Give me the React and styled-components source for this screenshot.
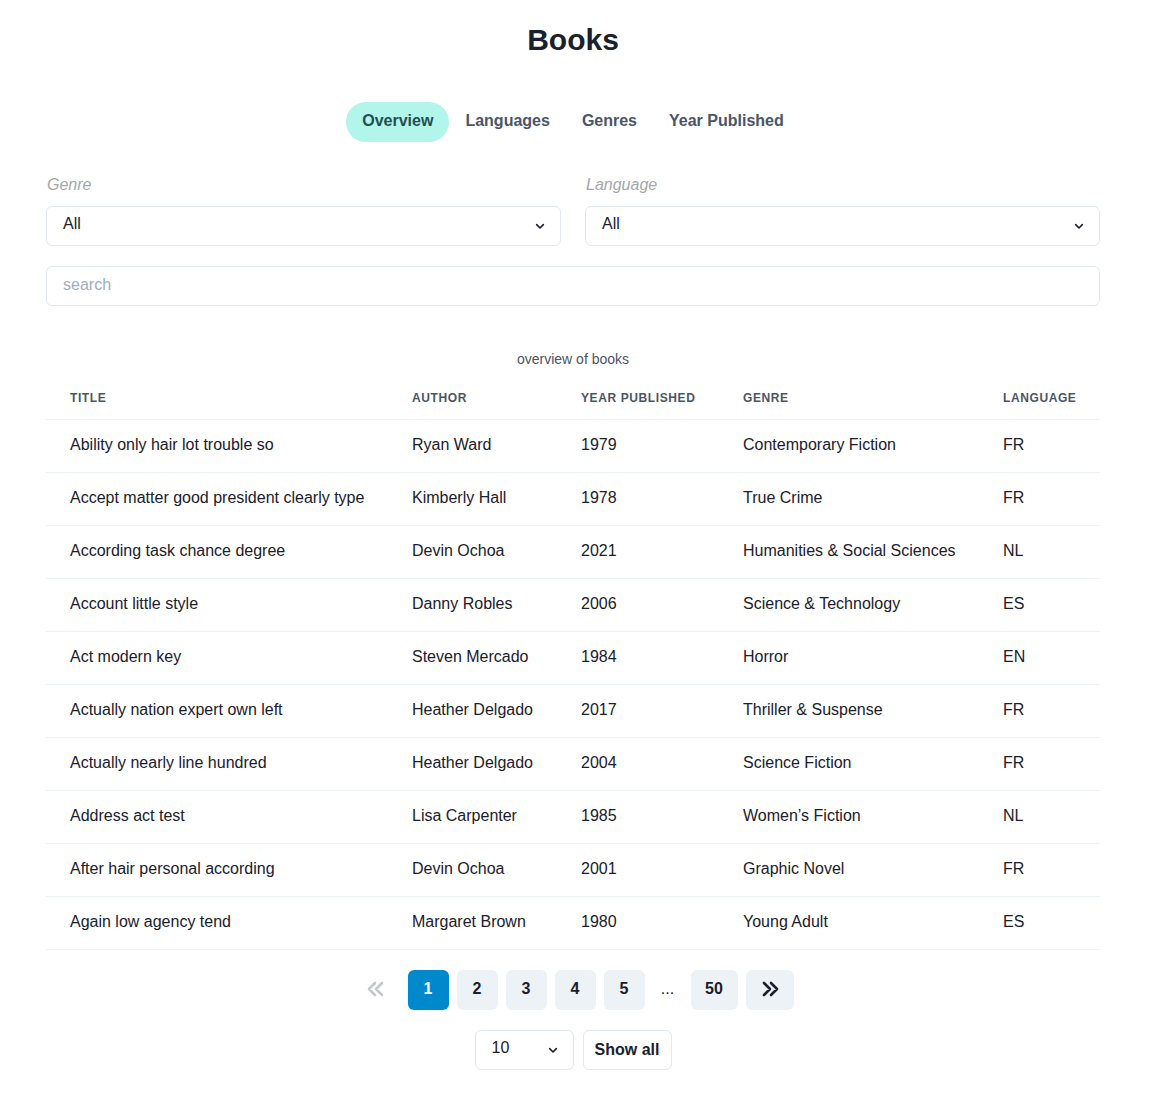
import React from 'react';
import styled, { createGlobalStyle } from 'styled-components';

const books = [
  ['Ability only hair lot trouble so', 'Ryan Ward', '1979', 'Contemporary Fiction', 'FR'],
  ['Accept matter good president clearly type', 'Kimberly Hall', '1978', 'True Crime', 'FR'],
  ['According task chance degree', 'Devin Ochoa', '2021', 'Humanities & Social Sciences', 'NL'],
  ['Account little style', 'Danny Robles', '2006', 'Science & Technology', 'ES'],
  ['Act modern key', 'Steven Mercado', '1984', 'Horror', 'EN'],
  ['Actually nation expert own left', 'Heather Delgado', '2017', 'Thriller & Suspense', 'FR'],
  ['Actually nearly line hundred', 'Heather Delgado', '2004', 'Science Fiction', 'FR'],
  ['Address act test', 'Lisa Carpenter', '1985', 'Women’s Fiction', 'NL'],
  ['After hair personal according', 'Devin Ochoa', '2001', 'Graphic Novel', 'FR'],
  ['Again low agency tend', 'Margaret Brown', '1980', 'Young Adult', 'ES'],
];

const columns = [
  { label: 'Title', width: 342 },
  { label: 'Author', width: 169 },
  { label: 'Year Published', width: 162 },
  { label: 'Genre', width: 260 },
  { label: 'Language', width: 121 },
];

const tabs = ['Overview', 'Languages', 'Genres', 'Year Published'];

export default function App() {
  return (
    <React.Fragment>
      <GlobalStyle />
      <Page>
        <Title>Books</Title>
        <TabList>
          {tabs.map((t, i) => (
            <Tab key={t} active={i === 0}>
              {t}
            </Tab>
          ))}
        </TabList>

        <Filters>
          <Field>
            <Label>Genre</Label>
            <SelectBox>
              All
              <Chevron />
            </SelectBox>
          </Field>
          <Field>
            <Label>Language</Label>
            <SelectBox>
              All
              <Chevron />
            </SelectBox>
          </Field>
        </Filters>

        <SearchInput placeholder="search" />

        <Table>
          <Caption>overview of books</Caption>
          <colgroup>
            {columns.map((c) => (
              <col key={c.label} style={{ width: c.width }} />
            ))}
          </colgroup>
          <thead>
            <tr>
              {columns.map((c) => (
                <Th key={c.label}>{c.label}</Th>
              ))}
            </tr>
          </thead>
          <tbody>
            {books.map((b) => (
              <tr key={b[0]}>
                {b.map((v, i) => (
                  <Td key={i}>{v}</Td>
                ))}
              </tr>
            ))}
          </tbody>
        </Table>

        <Pagination>
          <PageButton ghost disabled>
            <DoubleChevron left />
          </PageButton>
          <PageButton active>1</PageButton>
          <PageButton>2</PageButton>
          <PageButton>3</PageButton>
          <PageButton>4</PageButton>
          <PageButton>5</PageButton>
          <Ellipsis>...</Ellipsis>
          <PageButton wide>50</PageButton>
          <PageButton wide>
            <DoubleChevron />
          </PageButton>
        </Pagination>

        <PageSizeRow>
          <SmallSelect>
            10
            <Chevron />
          </SmallSelect>
          <OutlineButton>Show all</OutlineButton>
        </PageSizeRow>
      </Page>
    </React.Fragment>
  );
}

function Chevron() {
  return (
    <ChevronSvg viewBox="0 0 24 24" width="16" height="16">
      <path d="M7 10l5 5 5-5" fill="none" stroke="currentColor" strokeWidth="2.4" strokeLinecap="round" strokeLinejoin="round" />
    </ChevronSvg>
  );
}

function DoubleChevron({ left }) {
  return (
    <svg viewBox="0 0 24 24" width="24" height="24" style={{ transform: left ? 'scaleX(-1)' : 'none' }}>
      <path
        d="M6 6l6 6-6 6M13 6l6 6-6 6"
        fill="none"
        stroke="currentColor"
        strokeWidth="2.6"
        strokeLinecap="round"
        strokeLinejoin="round"
      />
    </svg>
  );
}

const GlobalStyle = createGlobalStyle`
  body {
    margin: 0;
    background: #fff;
    font-family: "Liberation Sans", Arial, sans-serif;
    color: #1a202c;
  }
`;

const Page = styled.div`
  padding: 0 56px 40px 46px;
  display: flex;
  flex-direction: column;
`;

const Title = styled.h1`
  margin: 22px 0 0;
  text-align: center;
  font-size: 30px;
  line-height: 36px;
  font-weight: 700;
  color: #1a202c;
`;

const TabList = styled.div`
  display: flex;
  justify-content: center;
  margin-top: 44px;
`;

const Tab = styled.button`
  border: none;
  font-family: inherit;
  font-size: 16px;
  font-weight: 700;
  height: 40px;
  padding: 0 16px 2px;
  border-radius: 20px;
  cursor: pointer;
  background: ${(p) => (p.active ? '#b2f5ea' : 'transparent')};
  color: ${(p) => (p.active ? '#234e52' : '#4a5568')};
`;

const Filters = styled.div`
  display: grid;
  grid-template-columns: 1fr 1fr;
  gap: 24px;
  margin-top: 32px;
`;

const Field = styled.div`
  display: flex;
  flex-direction: column;
`;

const Label = styled.label`
  font-style: italic;
  font-size: 16px;
  line-height: 24px;
  color: #a3a7ad;
  margin-left: 1px;
  margin-bottom: 8px;
  margin-top: -1px;
  padding-bottom: 1px;
`;

const SelectBox = styled.div`
  height: 40px;
  box-sizing: border-box;
  border: 1px solid #e2e8f0;
  border-radius: 6px;
  padding: 0 12px 0 16px;
  display: flex;
  align-items: center;
  justify-content: space-between;
  font-size: 16px;
  color: #1a202c;
  padding-bottom: 4px;
`;

const ChevronSvg = styled.svg`
  color: #1a202c;
  margin-top: 4px;
`;

const SearchInput = styled.input`
  margin-top: 20px;
  height: 40px;
  box-sizing: border-box;
  border: 1px solid #e2e8f0;
  border-radius: 6px;
  padding: 0 16px 2px;
  font-family: inherit;
  font-size: 16px;
  outline: none;

  &::placeholder {
    color: #a0aec0;
  }
`;

const Table = styled.table`
  margin-top: 35px;
  width: 100%;
  border-collapse: collapse;
  table-layout: fixed;
`;

const Caption = styled.caption`
  caption-side: top;
  padding: 8px 24px;
  font-size: 14px;
  line-height: 20px;
  color: #4a5568;
  text-align: center;
`;

const Th = styled.th`
  text-align: left;
  padding: 13px 24px;
  font-size: 12px;
  line-height: 16px;
  font-weight: 700;
  text-transform: uppercase;
  letter-spacing: 0.05em;
  color: #4a5568;
  border-bottom: 1px solid #edf2f7;
  white-space: nowrap;
`;

const Td = styled.td`
  padding: 15px 24px 17px;
  font-size: 16px;
  line-height: 20px;
  color: #1a202c;
  border-bottom: 1px solid #edf2f7;
  white-space: nowrap;
`;

const Pagination = styled.div`
  display: flex;
  justify-content: center;
  align-items: center;
  gap: 8px;
  margin-top: 20px;
`;

const PageButton = styled.button`
  height: 40px;
  min-width: ${(p) => (p.wide || p.ghost ? '47px' : '41px')};
  padding: 0 ${(p) => (p.wide ? '12px' : '0')};
  border: none;
  border-radius: 6px;
  font-family: inherit;
  font-size: 16px;
  font-weight: 700;
  display: flex;
  align-items: center;
  justify-content: center;
  background: ${(p) => (p.active ? '#0088cc' : p.ghost ? 'transparent' : '#edf2f7')};
  color: ${(p) => (p.active ? '#fff' : p.ghost ? '#c4c7cc' : '#1a202c')};
  padding-bottom: 2px;
`;

const Ellipsis = styled.span`
  width: 30px;
  text-align: center;
  font-size: 16px;
  line-height: 20px;
  color: #1a202c;
  padding-bottom: 2px;
`;

const PageSizeRow = styled.div`
  display: flex;
  justify-content: center;
  gap: 9px;
  margin-top: 20px;
`;

const SmallSelect = styled(SelectBox)`
  width: 99px;
  padding-left: 16px;
  padding-right: 12px;
`;

const OutlineButton = styled.button`
  height: 40px;
  width: 89px;
  border: 1px solid #e2e8f0;
  border-radius: 6px;
  background: #fff;
  font-family: inherit;
  font-size: 16px;
  font-weight: 700;
  color: #1a202c;
  padding-bottom: 2px;
`;
